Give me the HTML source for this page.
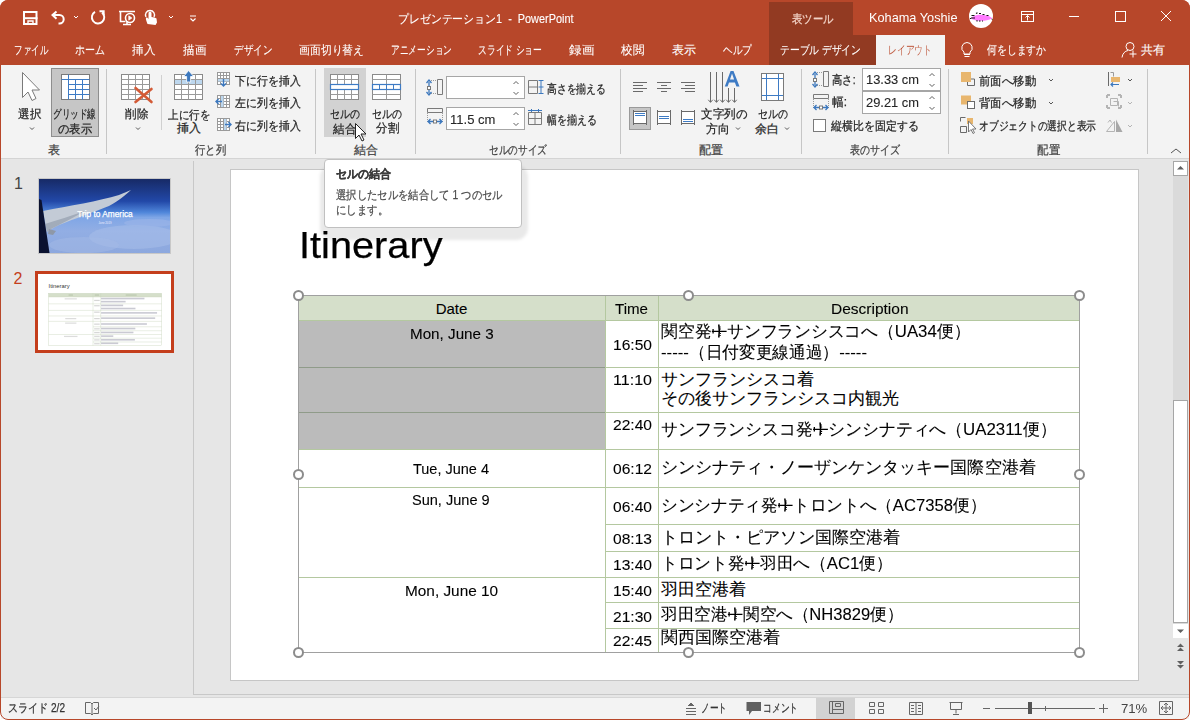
<!DOCTYPE html>
<html><head><meta charset="utf-8">
<style>
*{margin:0;padding:0;box-sizing:border-box}
html,body{width:1190px;height:720px;overflow:hidden;background:#fff}
body{font-family:"Liberation Sans",sans-serif;position:relative;color:#262626}
.a{position:absolute}
.w{color:#fff}
.t{position:absolute;white-space:nowrap;line-height:1;-webkit-text-stroke:0.25px currentColor}
#titlebar{left:0;top:0;width:1190px;height:65px;background:#B7472A;border-radius:8px 8px 0 0}
#ribbon{left:1px;top:65px;width:1188px;height:94px;background:#F3F3F3;border-bottom:1px solid #D4D4D4}
#pane{left:1px;top:159px;width:1188px;height:538px;background:#E6E6E6}
#status{left:1px;top:697px;width:1188px;height:22px;background:#F3F3F3;border-top:1px solid #D6D6D6}
#frame{left:0;top:0;width:1190px;height:720px;border:1px solid #B7472A;border-radius:8px;pointer-events:none}
.tab{font-size:12px;color:#fff;top:44px;-webkit-text-stroke:0.1px #fff}
.sep{position:absolute;width:1px;background:#C6C6C6}
.rb{font-size:11px;color:#262626}
.glab{font-size:11px;color:#444;top:144px}
.inp{position:absolute;background:#fff;border:1px solid #A6A6A6}
</style></head><body>
<div id="titlebar" class="a"></div>
<div id="ribbon" class="a"></div>
<div id="pane" class="a"></div>
<div id="status" class="a"></div>

<!-- contextual tab area -->
<div class="a" style="left:769px;top:2px;width:84px;height:33px;background:#923A22"></div>
<div class="a" style="left:769px;top:35px;width:107px;height:30px;background:#923A22"></div>
<div class="a" style="left:876px;top:35px;width:69px;height:30px;background:#F3F3F3"></div>
<div class="t" style="left:791.5px;top:12.5px;font-size:12px;color:#F2D2C6;--w:41.5px">表ツール</div>
<div class="t" style="left:869px;top:10.5px;font-size:13px;color:#fff;--w:88.5px;-webkit-text-stroke:0">Kohama Yoshie</div>
<div class="t" style="left:398px;top:12.5px;font-size:12px;color:#fff;--w:175.5px;-webkit-text-stroke:0.1px #fff">プレゼンテーション1&nbsp; -&nbsp; PowerPoint</div>

<!-- tabs -->
<div class="t tab" style="left:14px;--w:34px">ファイル</div>
<div class="t tab" style="left:75px;--w:30px">ホーム</div>
<div class="t tab" style="left:132px;--w:23px">挿入</div>
<div class="t tab" style="left:183px;--w:23px">描画</div>
<div class="t tab" style="left:234px;--w:38px">デザイン</div>
<div class="t tab" style="left:299px;--w:65px">画面切り替え</div>
<div class="t tab" style="left:391px;--w:61px">アニメーション</div>
<div class="t tab" style="left:478px;--w:64px">スライド ショー</div>
<div class="t tab" style="left:569px;--w:25px">録画</div>
<div class="t tab" style="left:621px;--w:23px">校閲</div>
<div class="t tab" style="left:672px;--w:24px">表示</div>
<div class="t tab" style="left:723px;--w:29px">ヘルプ</div>
<div class="t tab" style="left:780px;--w:81px">テーブル デザイン</div>
<div class="t tab" style="left:888px;--w:44px;color:#B7472A">レイアウト</div>
<div class="t tab" style="left:987px;--w:59px">何をしますか</div>
<div class="t tab" style="left:1141px;--w:24px">共有</div>

<!-- separators -->
<div class="sep" style="left:106px;top:69px;height:85px"></div>
<div class="sep" style="left:315px;top:69px;height:85px"></div>
<div class="sep" style="left:415px;top:69px;height:85px"></div>
<div class="sep" style="left:620px;top:69px;height:85px"></div>
<div class="sep" style="left:801px;top:69px;height:85px"></div>
<div class="sep" style="left:948px;top:69px;height:85px"></div>
<div class="sep" style="left:1147px;top:69px;height:85px"></div>

<!-- group labels -->


<div class="a" style="left:51px;top:68px;width:48px;height:69px;background:#C6C6C6;border:1px solid #8E8E8E"></div>
<div class="a" style="left:324px;top:68px;width:42px;height:69px;background:#D2D2D2"></div>
<div class="a" style="left:629px;top:107px;width:22px;height:23px;background:#C6C6C6;border:1px solid #9A9A9A"></div>
<div class="inp" style="left:446px;top:76px;width:79px;height:23px"></div>
<div class="inp" style="left:446px;top:107px;width:79px;height:23px"></div>
<div class="inp" style="left:862px;top:68px;width:79px;height:23px"></div>
<div class="inp" style="left:862px;top:91px;width:79px;height:23px"></div>
<div class="a" style="left:813px;top:119px;width:13px;height:13px;background:#fff;border:1px solid #7A7A7A"></div>
<div class="t" style="left:48px;top:143.5px;font-size:12px;--w:12px;color:#444">表</div>
<div class="t" style="left:195px;top:143.5px;font-size:12px;--w:31px;color:#444">行と列</div>
<div class="t" style="left:354px;top:143.5px;font-size:12px;--w:24px;color:#444">結合</div>
<div class="t" style="left:489px;top:143.5px;font-size:12px;--w:58px;color:#444">セルのサイズ</div>
<div class="t" style="left:699px;top:143.5px;font-size:12px;--w:24px;color:#444">配置</div>
<div class="t" style="left:850px;top:143.5px;font-size:12px;--w:50px;color:#444">表のサイズ</div>
<div class="t" style="left:1037px;top:143.5px;font-size:12px;--w:23px;color:#444">配置</div>
<div class="t" style="left:18px;top:107.5px;font-size:12px;--w:23px">選択</div>
<div class="t" style="left:53px;top:107.5px;font-size:12px;--w:43px">グリッド線</div>
<div class="t" style="left:57.6px;top:123.0px;font-size:12px;--w:34px">の表示</div>
<div class="t" style="left:124.6px;top:107.6px;font-size:12px;--w:23px">削除</div>
<div class="t" style="left:168px;top:108.5px;font-size:12px;--w:42px">上に行を</div>
<div class="t" style="left:176.7px;top:122.4px;font-size:12px;--w:24px">挿入</div>
<div class="t" style="left:235px;top:74.7px;font-size:12px;--w:65.5px">下に行を挿入</div>
<div class="t" style="left:235px;top:97.4px;font-size:12px;--w:65.5px">左に列を挿入</div>
<div class="t" style="left:235px;top:119.6px;font-size:12px;--w:65.5px">右に列を挿入</div>
<div class="t" style="left:330px;top:107.5px;font-size:12px;--w:30px">セルの</div>
<div class="t" style="left:333px;top:122.7px;font-size:12px;--w:23px">結合</div>
<div class="t" style="left:372.3px;top:107.5px;font-size:12px;--w:30px">セルの</div>
<div class="t" style="left:375.5px;top:122.4px;font-size:12px;--w:23px">分割</div>
<div class="t" style="left:547.4px;top:83.0px;font-size:12px;--w:58.6px">高さを揃える</div>
<div class="t" style="left:547.4px;top:114.0px;font-size:12px;--w:49.6px">幅を揃える</div>
<div class="t" style="left:449.6px;top:112.5px;font-size:13px;--w:45.4px;color:#262626;-webkit-text-stroke:0.1px #262626">11.5 cm</div>
<div class="t" style="left:700.7px;top:107.8px;font-size:12px;--w:46.3px">文字列の</div>
<div class="t" style="left:705.8px;top:123.0px;font-size:12px;--w:23.5px">方向</div>
<div class="t" style="left:758px;top:107.8px;font-size:12px;--w:30px">セルの</div>
<div class="t" style="left:754.5px;top:123.0px;font-size:12px;--w:24px">余白</div>
<div class="t" style="left:832px;top:73.8px;font-size:12px;--w:23.5px">高さ:</div>
<div class="t" style="left:832px;top:96.0px;font-size:12px;--w:15px">幅:</div>
<div class="t" style="left:865.5px;top:73.3px;font-size:13px;--w:53px;color:#262626;-webkit-text-stroke:0.1px #262626">13.33 cm</div>
<div class="t" style="left:865.5px;top:95.5px;font-size:13px;--w:53px;color:#262626;-webkit-text-stroke:0.1px #262626">29.21 cm</div>
<div class="t" style="left:831px;top:120.0px;font-size:12px;--w:87.5px">縦横比を固定する</div>
<div class="t" style="left:979px;top:74.5px;font-size:12px;--w:57px">前面へ移動</div>
<div class="t" style="left:979px;top:97.0px;font-size:12px;--w:57px">背面へ移動</div>
<div class="t" style="left:979px;top:120.0px;font-size:12px;--w:117px">オブジェクトの選択と表示</div>
<svg class="a" style="left:0;top:0" width="1190" height="160" viewBox="0 0 1190 160">
<g fill="none" stroke-width="1">
<!-- select arrow -->
<path d="M22.5 72.5V97.5L28 92l4 8.5 4-2-4-8.5h7.5z" fill="#fff" stroke="#7A7A7A"/>
<!-- grid icon -->
<rect x="61.5" y="74.5" width="28" height="25" fill="#fff" stroke="#7A7A7A"/>
<path d="M61.5 79.5h28M68.5 74.5v25M68.5 84.5h21M68.5 89.5h21M68.5 94.5h21M75.5 79.5v20M82.5 79.5v20" stroke="#3E7BC4"/>
<!-- delete grid -->
<rect x="121.5" y="74.5" width="28" height="25" fill="#fff" stroke="#8A8A8A"/>
<path d="M128.5 74.5v25M135.5 74.5v25M142.5 74.5v25M121.5 79.5h28M121.5 84.5h28M121.5 89.5h28M121.5 94.5h28" stroke="#9A9A9A"/>
<path d="M135.5 88l16 14M151.5 89l-16 13" stroke="#D35A36" stroke-width="2.6" stroke-linecap="round"/>
<path d="M161.5 75v55" stroke="#D0D0D0"/>
<!-- insert above -->
<rect x="174.5" y="74.5" width="28" height="25" fill="#fff" stroke="#8A8A8A"/>
<rect x="175" y="80" width="27" height="4.5" fill="#BDD7EE"/>
<path d="M181.5 74.5v25M188.5 74.5v25M195.5 74.5v25M174.5 79.5h28M174.5 84.5h28M174.5 89.5h28M174.5 94.5h28" stroke="#9A9A9A"/>
<path d="M188.6 70.5l-5 6h3v5.5h4v-5.5h3z" fill="#3C78BE" stroke="#fff" stroke-width="0.8"/>
<!-- small insert icons -->
<g stroke="#9A9A9A">
<rect x="217.5" y="72.5" width="12" height="12" fill="#fff"/>
<path d="M220.5 72.5v12M223.5 72.5v12M226.5 72.5v12M217.5 75.5h12M217.5 78.5h12M217.5 81.5h12"/>
<rect x="217.5" y="95.5" width="12" height="12" fill="#fff"/>
<path d="M220.5 95.5v12M223.5 95.5v12M226.5 95.5v12M217.5 98.5h12M217.5 101.5h12M217.5 104.5h12"/>
<rect x="217.5" y="118.5" width="12" height="12" fill="#fff"/>
<path d="M220.5 118.5v12M223.5 118.5v12M226.5 118.5v12M217.5 121.5h12M217.5 124.5h12M217.5 127.5h12"/>
</g>
<rect x="218" y="79" width="11" height="2.5" fill="#BDD7EE"/>
<rect x="221" y="96" width="2.5" height="11" fill="#BDD7EE"/>
<rect x="224" y="119" width="2.5" height="11" fill="#BDD7EE"/>
<path d="M223.5 79v7M221 83.5l2.5 2.5 2.5-2.5" stroke="#3C78BE" stroke-width="1.4"/>
<path d="M216 101.5h6M218.5 99l-2.5 2.5 2.5 2.5" stroke="#3C78BE" stroke-width="1.4"/>
<path d="M225 124.5h6M228.5 122l2.5 2.5-2.5 2.5" stroke="#3C78BE" stroke-width="1.4"/>
<!-- merge -->
<rect x="330.5" y="74.5" width="28" height="25" fill="#fff" stroke="#8A8A8A"/>
<path d="M337.5 74.5v10M344.5 74.5v10M351.5 74.5v10M337.5 89.5v10M344.5 89.5v10M351.5 89.5v10M330.5 79.5h28M330.5 94.5h28" stroke="#9A9A9A"/>
<rect x="330.5" y="84.5" width="28" height="5" stroke="#3E7BC4" stroke-width="1.2"/>
<!-- split -->
<rect x="372.5" y="74.5" width="28" height="25" fill="#fff" stroke="#8A8A8A"/>
<path d="M386.5 74.5v10M386.5 89.5v10M372.5 79.5h28M372.5 94.5h28" stroke="#9A9A9A"/>
<rect x="372.5" y="84.5" width="28" height="5" stroke="#3E7BC4" stroke-width="1.2"/>
<path d="M379.5 84.5v5M386.5 84.5v5M393.5 84.5v5" stroke="#3E7BC4"/>
<!-- cell height/width icons -->
<path d="M437.5 79.5h5v15h-5z" stroke="#7A7A7A"/>
<path d="M429 80.5h8M429 93.5h8" stroke="#9A9A9A" stroke-dasharray="1 1"/>
<path d="M429 82v11" stroke="#3C78BE" stroke-width="1.3"/>
<path d="M426.5 83l2.5-3 2.5 3M426.5 92l2.5 3 2.5-3" stroke="#3C78BE" stroke-width="1.3"/>
<rect x="427.5" y="86.5" width="3" height="3" fill="#fff" stroke="#7A7A7A"/>
<path d="M427.5 108.5h15v4h-15z" stroke="#7A7A7A"/>
<path d="M427.5 113v9M442.5 113v9" stroke="#9A9A9A" stroke-dasharray="1 1"/>
<path d="M428 121.5h14M430.5 119l-2.5 2.5 2.5 2.5M439.5 119l2.5 2.5-2.5 2.5" stroke="#3C78BE" stroke-width="1.3"/>
<rect x="433.5" y="120" width="3" height="3" fill="#fff" stroke="#7A7A7A"/>
<!-- distribute -->
<path d="M528.5 80.5h9v13h-9zM528.5 87h9" stroke="#7A7A7A"/>
<path d="M538.5 80.5h5M538.5 87h5M538.5 93.5h5M541 80v14" stroke="#3C78BE"/>
<path d="M528.5 112.5h13v12h-13zM535 112.5v12M528.5 118.5h13" stroke="#7A7A7A"/>
<path d="M528 110.5h14M531.5 109v3M538.5 109v3" stroke="#3C78BE"/>
<!-- spinners -->
<g stroke="#606060">
<path d="M513.5 84l2.5-2.5 2.5 2.5M513.5 92l2.5 2.5 2.5-2.5"/>
<path d="M513.5 115l2.5-2.5 2.5 2.5M513.5 123l2.5 2.5 2.5-2.5"/>
<path d="M929.5 76l2.5-2.5 2.5 2.5M929.5 84l2.5 2.5 2.5-2.5"/>
<path d="M929.5 99l2.5-2.5 2.5 2.5M929.5 107l2.5 2.5 2.5-2.5"/>
</g>
<!-- align -->
<g stroke="#6A6A6A">
<path d="M633 82.5h14M633 85.5h10M633 88.5h14M633 91.5h10"/>
<path d="M657 82.5h14M661 85.5h6M657 88.5h14M661 91.5h6"/>
<path d="M681 82.5h14M685 85.5h10M681 88.5h14M685 91.5h10"/>
<rect x="633.5" y="111.5" width="13" height="12" fill="#fff"/>
<rect x="657.5" y="111.5" width="13" height="12" fill="#fff"/>
<rect x="681.5" y="111.5" width="13" height="12" fill="#fff"/>
<path d="M633.5 110v15M646.5 110v15M657.5 110v15M670.5 110v15M681.5 110v15M694.5 110v15"/>
</g>
<path d="M635 113.5h10M635 115.5h10M659 116.5h10M659 118.5h10M683 119.5h10M683 121.5h10" stroke="#3E7BC4"/>
<!-- text direction -->
<g stroke="#6A6A6A">
<path d="M710.5 72v30M716.5 72v30M722.5 72v30M728.5 88v14M734.5 88v14"/>
<path d="M708.3 99.8l2.2 2.6 2.2-2.6M714.3 99.8l2.2 2.6 2.2-2.6M720.3 99.8l2.2 2.6 2.2-2.6M726.3 99.8l2.2 2.6 2.2-2.6M732.3 99.8l2.2 2.6 2.2-2.6"/>
</g>
<path d="M724.8 86.6L730.6 71h2.9l6 15.6h-3.1l-1.5-4.2h-5.9l-1.4 4.2zM730 79.6h4.1L732 73.6z" fill="#3E7BC4" stroke="none" fill-rule="evenodd"/>
<!-- cell margins -->
<rect x="761.5" y="73.5" width="22" height="27" fill="#fff" stroke="#7A7A7A"/>
<path d="M766.5 74v26M778.5 74v26M762 78.5h21M762 95.5h21" stroke="#3E7BC4"/>
<!-- table size icons -->
<path d="M823.5 71.5h5v15h-5z" stroke="#7A7A7A"/>
<path d="M815 72.5h8M815 85.5h8" stroke="#9A9A9A" stroke-dasharray="1 1"/>
<path d="M815 74v11M812.5 75l2.5-3 2.5 3M812.5 84l2.5 3 2.5-3" stroke="#3C78BE" stroke-width="1.3"/>
<rect x="813.5" y="78.5" width="3" height="3" fill="#fff" stroke="#7A7A7A"/>
<path d="M813.5 94.5h15v4h-15z" stroke="#7A7A7A"/>
<path d="M813.5 99v9M828.5 99v9" stroke="#9A9A9A" stroke-dasharray="1 1"/>
<path d="M814 107.5h14M816.5 105l-2.5 2.5 2.5 2.5M825.5 105l2.5 2.5-2.5 2.5" stroke="#3C78BE" stroke-width="1.3"/>
<rect x="819.5" y="106" width="3" height="3" fill="#fff" stroke="#7A7A7A"/>
<!-- arrange -->
<rect x="961" y="72" width="10" height="10" fill="#E8B66E"/>
<path d="M967.5 82v3.5h7v-6.5h-3.5" stroke="#6A6A6A"/>
<rect x="961" y="95.5" width="10" height="9" fill="#E8B66E"/>
<rect x="967.5" y="101.5" width="7" height="7" fill="#fff" stroke="#6A6A6A"/>
<path d="M960.5 117.5h5M960.5 117.5v4M960.5 126.5h6v6h-6z" stroke="#6A6A6A"/>
<rect x="967" y="118" width="6" height="6" fill="#E8B66E"/>
<path d="M968.5 121v11l2.5-2.5 2 4 1.5-.8-2-3.7h3.5z" fill="#fff" stroke="#6A6A6A" stroke-width="0.9"/>
<path d="M1108.5 72v14" stroke="#6A6A6A"/>
<path d="M1110.5 72.5h3v4" stroke="#9A9A9A"/>
<rect x="1111" y="77" width="9" height="5" fill="#E8B66E"/>
<path d="M1111 84.5h8M1113 82.5l-2 2 2 2" stroke="#3C78BE" stroke-width="1.2"/>
<g stroke="#B4B4B4">
<path d="M1107 95h3M1118 95h3M1107 108h3M1118 108h3M1107 95v3M1107 105v3M1121 95v3M1121 105v3" stroke-width="2"/>
<path d="M1110.5 98.5h7v7h-7zM1113.5 101.5h5v5" />
<path d="M1106.5 131.5h8v-10z" stroke-width="1"/>
<path d="M1108 122.5l2-2.5 1.5 2.5" stroke-width="1"/>
</g>
<path d="M1116 119.5l6.5 12.5h-6.5z" fill="#A8A8A8"/>
<!-- chevrons -->
<g stroke="#555" stroke-width="1">
<path d="M30 127.5l2 2 2-2M136 127.5l2 2 2-2M736 127.5l2 2 2-2M785 127.5l2 2 2-2"/>
<path d="M1049 79l2 2 2-2M1049 102l2 2 2-2M1128 79l2 2 2-2"/>
</g>
<path d="M1128 102l2 2 2-2M1128 125l2 2 2-2" stroke="#B4B4B4"/>
<path d="M1171 153l5-4 5 4" stroke="#555"/>
<!-- mouse cursor -->
<path d="M355.5 123.5v15l3.5-3.5 3 6 2-1-3-6h5z" fill="#fff" stroke="#222" stroke-width="1"/>
</g>
</svg>

<!-- slide canvas -->
<div class="a" style="left:193px;top:161px;width:1px;height:534px;background:#C8C8C8"></div>
<div class="a" style="left:230px;top:169px;width:909px;height:512px;background:#fff;border:1px solid #C6C6C6"></div>


<svg class="a" style="left:0;top:0" width="1190" height="160" viewBox="0 0 1190 160">
<g fill="none" stroke-linecap="butt">
<!-- QAT icons white -->
<g stroke="#fff" stroke-width="1.6">
 <path d="M24 12h12.5v12h-12.5z" stroke-width="2"/>
 <path d="M23 18.2h14.5" stroke-width="2"/>
 <path d="M28 24v-3h5v3" stroke-width="1.4"/>
 <path d="M56.5 11.5L52.5 15l4 3.8M52.5 15H59.5a4.2 4.2 0 0 1 0 8.4H58.5" stroke-width="2"/>
 <path d="M74 16l2 2 2-2" stroke-width="1"/>
 <path d="M95 11.9A6.2 6.2 0 1 0 102 12.5" stroke-width="1.9"/>
 <path d="M99.5 11.2h4.2v4.2" stroke-width="1.9"/>
 <path d="M119 11.5h16M120.5 11.5v10h5M131 24.5h-8M127 21v3.5"/>
 <circle cx="130" cy="18" r="4.5"/>
 <path d="M128.8 15.8l3 2.2-3 2.2z" fill="#fff" stroke-width="0.8"/>
 <path d="M169 16l2 2 2-2" stroke-width="1"/>
 <path d="M190 16h6M190.5 18.5l2.5 2.5 2.5-2.5" stroke-width="1.2"/>
</g>
<path d="M147.5 24c-1-3-2-5-1.5-6s2 0 2.5 1v-6a1.5 1.5 0 0 1 3 0v4c2 .3 4 .8 5 1.5l.5 4-1.5 2.5z" fill="#fff"/>
<path d="M146 17a4.5 4.5 0 1 1 8 0" stroke="#fff" stroke-width="1.4"/>
<!-- window buttons -->
<g stroke="#fff" stroke-width="1">
 <rect x="1021.5" y="11.5" width="12" height="10"/>
 <path d="M1021.5 14.5h12M1027.5 20.5v-5M1025.5 17.5l2-2 2 2"/>
 <path d="M1069 16.5h10"/>
 <rect x="1115.5" y="11.5" width="10" height="10"/>
 <path d="M1161 11l10 10M1171 11l-10 10"/>
 <path d="M964 54.5h6M964.5 56.5h5M967 42.5a5.3 5.3 0 0 0-3 9.6v1.9h6v-1.9a5.3 5.3 0 0 0-3-9.6z"/>
 <circle cx="1130" cy="46.5" r="4"/>
 <path d="M1122 57.5c.5-4 3-6.5 6-7M1133 50.5v7M1129.5 54h7"/>
</g>
</g>
</svg>
<svg class="a" style="left:969px;top:4px" width="24" height="24" viewBox="0 0 24 24"><circle cx="12" cy="12" r="12" fill="#fff"/><path d="M2 14.5C4 11.5 8 10.5 12 10.8C16 11 20 11.5 23.3 14.3C20 16.2 16 16.8 12 16.8C8 16.8 4 16.3 2 14.5z" fill="#FF7BFF"/><path d="M7 9.5l1.5-0.8M10 9.5h2M13.5 10.5h2M17.5 11.5h2M2.5 11.5h3M2 14h4M1.5 15v-1M7.5 16.5l1 .8M10 17h1.5M13 17h1M22.8 15.5l.5-.5" stroke="#111" stroke-width="1.1" fill="none"/></svg>

<div class="a" style="left:194px;top:694px;width:995px;height:1px;background:#C8C8C8"></div>
<div class="t" style="left:14px;top:175.5px;font-size:16px;color:#444;-webkit-text-stroke:0">1</div>
<div class="t" style="left:13.5px;top:270.5px;font-size:16px;color:#C43E1C;-webkit-text-stroke:0">2</div>
<div class="a" style="left:38px;top:178px;width:133px;height:76px;border:1px solid #C8C8C8;overflow:hidden">
<svg width="131" height="74" viewBox="0 0 131 74" style="display:block">
<defs><linearGradient id="sky" x1="0" y1="0" x2="0" y2="1">
<stop offset="0" stop-color="#172A66"/><stop offset="0.3" stop-color="#2248A8"/><stop offset="0.45" stop-color="#4F86DA"/><stop offset="0.52" stop-color="#7FA6E6"/><stop offset="0.7" stop-color="#92AEE4"/><stop offset="1" stop-color="#8DA8DE"/></linearGradient></defs>
<rect width="131" height="74" fill="url(#sky)"/>
<ellipse cx="95" cy="58" rx="45" ry="12" fill="#A9BFEA" opacity="0.5"/>
<ellipse cx="45" cy="66" rx="35" ry="8" fill="#A3B9E6" opacity="0.5"/>
<ellipse cx="110" cy="44" rx="25" ry="4" fill="#9DB6E8" opacity="0.6"/>
<path d="M4 32 C30 27 60 22 80 16 C85 14 89 12 92 11 C86 16 80 22 70 27 C55 33 35 40 20 46 C14 49 10 51 8 53z" fill="#C3CBD6"/>
<path d="M6 45 C18 41 32 37 46 32 C34 39 22 45 12 50 L8 53z" fill="#A2ACBA"/>
<path d="M10 50 L17 52 L14 56 L9 55z" fill="#8E98A8"/>
<path d="M0 20 L2.5 21 L10.5 74 L0 74z" fill="#0B1230"/>
<text x="66" y="37.5" font-size="8.3" fill="#fff" stroke="#fff" stroke-width="0.25" text-anchor="middle" font-family="Liberation Sans">Trip to America</text>
<text x="66" y="45" font-size="2.8" fill="#EEF" text-anchor="middle" font-family="Liberation Sans">June 2019</text>
</svg></div>
<div class="a" style="left:35px;top:271px;width:139px;height:82px;border:3px solid #C43E1C;background:#fff"></div>
<svg class="a" style="left:38px;top:274px" width="133" height="76" viewBox="0 0 133 76"><text x="10.6" y="14.2" font-size="5.8" fill="#333" font-family="Liberation Sans">Itinerary</text><rect x="10.5" y="19.3" width="113.20" height="3.66" fill="#D5DFCA"/><path d="M10.50 22.96H123.7" stroke="#C8D4BC" stroke-width="0.4"/><path d="M10.50 29.83H123.7" stroke="#C8D4BC" stroke-width="0.4"/><path d="M10.50 36.41H123.7" stroke="#C8D4BC" stroke-width="0.4"/><path d="M10.50 41.96H123.7" stroke="#C8D4BC" stroke-width="0.4"/><path d="M10.50 47.37H123.7" stroke="#C8D4BC" stroke-width="0.4"/><path d="M55.00 52.78H123.7" stroke="#C8D4BC" stroke-width="0.4"/><path d="M55.00 56.73H123.7" stroke="#C8D4BC" stroke-width="0.4"/><path d="M10.50 60.53H123.7" stroke="#C8D4BC" stroke-width="0.4"/><path d="M55.00 64.19H123.7" stroke="#C8D4BC" stroke-width="0.4"/><path d="M55.00 67.99H123.7" stroke="#C8D4BC" stroke-width="0.4"/><rect x="10.5" y="19.3" width="113.20" height="52.20" fill="none" stroke="#C8D4BC" stroke-width="0.4"/><path d="M55.00 19.3V71.5M62.68 19.3V71.5" stroke="#C8D4BC" stroke-width="0.4"/><rect x="63.11" y="23.76" width="43.34" height="1.6" fill="#7A7A90" opacity="0.4"/><rect x="63.11" y="26.83" width="24.50" height="1.6" fill="#7A7A90" opacity="0.4"/><rect x="63.11" y="30.64" width="22.03" height="1.6" fill="#7A7A90" opacity="0.4"/><rect x="63.11" y="33.71" width="34.35" height="1.6" fill="#7A7A90" opacity="0.4"/><rect x="63.11" y="38.09" width="55.95" height="1.6" fill="#7A7A90" opacity="0.4"/><rect x="63.11" y="43.36" width="54.06" height="1.6" fill="#7A7A90" opacity="0.4"/><rect x="63.11" y="49.21" width="45.80" height="1.6" fill="#7A7A90" opacity="0.4"/><rect x="63.11" y="53.74" width="34.21" height="1.6" fill="#7A7A90" opacity="0.4"/><rect x="63.11" y="57.69" width="32.32" height="1.6" fill="#7A7A90" opacity="0.4"/><rect x="63.11" y="61.34" width="12.18" height="1.6" fill="#7A7A90" opacity="0.4"/><rect x="63.11" y="65.00" width="33.77" height="1.6" fill="#7A7A90" opacity="0.4"/><rect x="63.11" y="68.51" width="17.10" height="1.6" fill="#7A7A90" opacity="0.4"/><rect x="56.16" y="25.86" width="5.51" height="1.2" fill="#8A8A8A" opacity="0.35"/><rect x="56.16" y="31.13" width="5.51" height="1.2" fill="#8A8A8A" opacity="0.35"/><rect x="56.16" y="37.56" width="5.51" height="1.2" fill="#8A8A8A" opacity="0.35"/><rect x="56.16" y="44.00" width="5.51" height="1.2" fill="#8A8A8A" opacity="0.35"/><rect x="56.16" y="49.55" width="5.51" height="1.2" fill="#8A8A8A" opacity="0.35"/><rect x="56.16" y="54.23" width="5.51" height="1.2" fill="#8A8A8A" opacity="0.35"/><rect x="56.16" y="58.03" width="5.51" height="1.2" fill="#8A8A8A" opacity="0.35"/><rect x="56.16" y="61.69" width="5.51" height="1.2" fill="#8A8A8A" opacity="0.35"/><rect x="56.16" y="65.34" width="5.51" height="1.2" fill="#8A8A8A" opacity="0.35"/><rect x="56.16" y="69.15" width="5.51" height="1.2" fill="#8A8A8A" opacity="0.35"/><rect x="26.66" y="24.26" width="12.18" height="1.2" fill="#9A9A9A" opacity="0.35"/><rect x="27.24" y="44.00" width="11.02" height="1.2" fill="#9A9A9A" opacity="0.35"/><rect x="27.10" y="48.53" width="11.31" height="1.2" fill="#9A9A9A" opacity="0.35"/><rect x="26.01" y="61.83" width="13.48" height="1.2" fill="#9A9A9A" opacity="0.35"/><rect x="30.57" y="20.55" width="4.35" height="1" fill="#8A9A7A" opacity="0.4"/><rect x="56.74" y="20.55" width="4.35" height="1" fill="#8A9A7A" opacity="0.4"/><rect x="87.75" y="20.55" width="10.87" height="1" fill="#8A9A7A" opacity="0.4"/></svg>
<div class="t" style="left:299px;top:228px;font-size:36.5px;color:#000;--w:143.5px">Itinerary</div>
<div class="a" style="left:298px;top:295px;width:781px;height:25px;background:#D5DFCA"></div><div class="a" style="left:298px;top:320px;width:307px;height:130px;background:#BBBBBB"></div><div class="a" style="left:298px;top:320px;width:781px;height:1px;background:#B4C8A0"></div><div class="a" style="left:298px;top:367px;width:781px;height:1px;background:#B4C8A0"></div><div class="a" style="left:298px;top:412px;width:781px;height:1px;background:#B4C8A0"></div><div class="a" style="left:298px;top:449px;width:781px;height:1px;background:#B4C8A0"></div><div class="a" style="left:298px;top:487px;width:781px;height:1px;background:#B4C8A0"></div><div class="a" style="left:605px;top:524px;width:474px;height:1px;background:#B4C8A0"></div><div class="a" style="left:605px;top:551px;width:474px;height:1px;background:#B4C8A0"></div><div class="a" style="left:298px;top:577px;width:781px;height:1px;background:#B4C8A0"></div><div class="a" style="left:605px;top:602px;width:474px;height:1px;background:#B4C8A0"></div><div class="a" style="left:605px;top:628px;width:474px;height:1px;background:#B4C8A0"></div><div class="a" style="left:605px;top:295px;width:1px;height:357px;background:#B4C8A0"></div><div class="a" style="left:658px;top:295px;width:1px;height:357px;background:#B4C8A0"></div><div class="a" style="left:298px;top:367px;width:307px;height:1px;background:#8F9B89"></div><div class="a" style="left:298px;top:412px;width:307px;height:1px;background:#8F9B89"></div><div class="a" style="left:298px;top:295px;width:782px;height:358px;border:1px solid #A0A0A0"></div><div class="a" style="left:293px;top:290px;width:11px;height:11px;border-radius:50%;background:#fff;border:2px solid #8C8C8C"></div><div class="a" style="left:683px;top:290px;width:11px;height:11px;border-radius:50%;background:#fff;border:2px solid #8C8C8C"></div><div class="a" style="left:1074px;top:290px;width:11px;height:11px;border-radius:50%;background:#fff;border:2px solid #8C8C8C"></div><div class="a" style="left:293px;top:469px;width:11px;height:11px;border-radius:50%;background:#fff;border:2px solid #8C8C8C"></div><div class="a" style="left:1074px;top:469px;width:11px;height:11px;border-radius:50%;background:#fff;border:2px solid #8C8C8C"></div><div class="a" style="left:293px;top:647px;width:11px;height:11px;border-radius:50%;background:#fff;border:2px solid #8C8C8C"></div><div class="a" style="left:683px;top:647px;width:11px;height:11px;border-radius:50%;background:#fff;border:2px solid #8C8C8C"></div><div class="a" style="left:1074px;top:647px;width:11px;height:11px;border-radius:50%;background:#fff;border:2px solid #8C8C8C"></div>
<div class="t" style="top:301.2px;font-size:15px;color:#000;-webkit-text-stroke:0.1px #000;left:251.5px;width:400px;text-align:center">Date</div>
<div class="t" style="top:301.2px;font-size:15px;color:#000;-webkit-text-stroke:0.1px #000;left:615.4px;--w:33px">Time</div>
<div class="t" style="top:301.2px;font-size:15px;color:#000;-webkit-text-stroke:0.1px #000;left:830.5px;--w:77.5px">Description</div>
<div class="t" style="top:326.0px;font-size:15px;color:#000;-webkit-text-stroke:0.1px #000;left:409.6px;--w:83.7px">Mon, June 3</div>
<div class="t" style="top:460.5px;font-size:15px;color:#000;-webkit-text-stroke:0.1px #000;left:413px;--w:76px">Tue, June 4</div>
<div class="t" style="top:492.1px;font-size:15px;color:#000;-webkit-text-stroke:0.1px #000;left:412.3px;--w:77.6px">Sun, June 9</div>
<div class="t" style="top:582.7px;font-size:15px;color:#000;-webkit-text-stroke:0.1px #000;left:405.4px;--w:93.1px">Mon, June 10</div>
<div class="t" style="top:337.0px;font-size:15px;color:#000;-webkit-text-stroke:0.1px #000;left:613px;--w:39px">16:50</div>
<div class="t" style="top:372.0px;font-size:15px;color:#000;-webkit-text-stroke:0.1px #000;left:613px;--w:39px">11:10</div>
<div class="t" style="top:417.4px;font-size:15px;color:#000;-webkit-text-stroke:0.1px #000;left:613px;--w:39px">22:40</div>
<div class="t" style="top:461.1px;font-size:15px;color:#000;-webkit-text-stroke:0.1px #000;left:613px;--w:39px">06:12</div>
<div class="t" style="top:498.7px;font-size:15px;color:#000;-webkit-text-stroke:0.1px #000;left:613px;--w:39px">06:40</div>
<div class="t" style="top:531.2px;font-size:15px;color:#000;-webkit-text-stroke:0.1px #000;left:613px;--w:39px">08:13</div>
<div class="t" style="top:556.9px;font-size:15px;color:#000;-webkit-text-stroke:0.1px #000;left:613px;--w:39px">13:40</div>
<div class="t" style="top:583.2px;font-size:15px;color:#000;-webkit-text-stroke:0.1px #000;left:613px;--w:39px">15:40</div>
<div class="t" style="top:608.5px;font-size:15px;color:#000;-webkit-text-stroke:0.1px #000;left:613px;--w:39px">21:30</div>
<div class="t" style="top:633.2px;font-size:15px;color:#000;-webkit-text-stroke:0.1px #000;left:613px;--w:39px">22:45</div>
<div class="t" style="left:661px;top:322.7px;font-size:17px;line-height:17px;color:#000;-webkit-text-stroke:0.1px #000;--w:309.3px">関空発<svg width="16" height="16" viewBox="0 0 16 16" style="display:inline-block;vertical-align:-2px"><path d="M0.5 8.3H15.5M1.8 6v4.6" stroke="#000" stroke-width="1.3" fill="none"/><path d="M7.6 1.5Q8.6 8 7.6 14.5" stroke="#000" stroke-width="1.6" fill="none"/><path d="M8.2 4h1.3M8.5 6h1.2M8.5 10.5h1.2M8.2 12.5h1.3" stroke="#000" stroke-width="1"/></svg>サンフランシスコへ（UA34便）</div>
<div class="t" style="left:661px;top:344.1px;font-size:17px;line-height:17px;color:#000;-webkit-text-stroke:0.1px #000;--w:206.0px">-----（日付変更線通過）-----</div>
<div class="t" style="left:661px;top:370.7px;font-size:17px;line-height:17px;color:#000;-webkit-text-stroke:0.1px #000;--w:153.0px">サンフランシスコ着</div>
<div class="t" style="left:661px;top:390.0px;font-size:17px;line-height:17px;color:#000;-webkit-text-stroke:0.1px #000;--w:238.0px">その後サンフランシスコ内観光</div>
<div class="t" style="left:661px;top:420.7px;font-size:17px;line-height:17px;color:#000;-webkit-text-stroke:0.1px #000;--w:395.4px">サンフランシスコ発<svg width="16" height="16" viewBox="0 0 16 16" style="display:inline-block;vertical-align:-2px"><path d="M0.5 8.3H15.5M1.8 6v4.6" stroke="#000" stroke-width="1.3" fill="none"/><path d="M7.6 1.5Q8.6 8 7.6 14.5" stroke="#000" stroke-width="1.6" fill="none"/><path d="M8.2 4h1.3M8.5 6h1.2M8.5 10.5h1.2M8.2 12.5h1.3" stroke="#000" stroke-width="1"/></svg>シンシナティへ（UA2311便）</div>
<div class="t" style="left:661px;top:459.0px;font-size:17px;line-height:17px;color:#000;-webkit-text-stroke:0.1px #000;--w:374.6px">シンシナティ・ノーザンケンタッキー国際空港着</div>
<div class="t" style="left:661px;top:496.5px;font-size:17px;line-height:17px;color:#000;-webkit-text-stroke:0.1px #000;--w:325.2px">シンシナティ発<svg width="16" height="16" viewBox="0 0 16 16" style="display:inline-block;vertical-align:-2px"><path d="M0.5 8.3H15.5M1.8 6v4.6" stroke="#000" stroke-width="1.3" fill="none"/><path d="M7.6 1.5Q8.6 8 7.6 14.5" stroke="#000" stroke-width="1.6" fill="none"/><path d="M8.2 4h1.3M8.5 6h1.2M8.5 10.5h1.2M8.2 12.5h1.3" stroke="#000" stroke-width="1"/></svg>トロントへ（AC7358便）</div>
<div class="t" style="left:661px;top:529.4px;font-size:17px;line-height:17px;color:#000;-webkit-text-stroke:0.1px #000;--w:238.9px">トロント・ピアソン国際空港着</div>
<div class="t" style="left:661px;top:555.1px;font-size:17px;line-height:17px;color:#000;-webkit-text-stroke:0.1px #000;--w:231.6px">トロント発<svg width="16" height="16" viewBox="0 0 16 16" style="display:inline-block;vertical-align:-2px"><path d="M0.5 8.3H15.5M1.8 6v4.6" stroke="#000" stroke-width="1.3" fill="none"/><path d="M7.6 1.5Q8.6 8 7.6 14.5" stroke="#000" stroke-width="1.6" fill="none"/><path d="M8.2 4h1.3M8.5 6h1.2M8.5 10.5h1.2M8.2 12.5h1.3" stroke="#000" stroke-width="1"/></svg>羽田へ（AC1便）</div>
<div class="t" style="left:661px;top:581.1px;font-size:17px;line-height:17px;color:#000;-webkit-text-stroke:0.1px #000;--w:85.0px">羽田空港着</div>
<div class="t" style="left:661px;top:605.8px;font-size:17px;line-height:17px;color:#000;-webkit-text-stroke:0.1px #000;--w:242.4px">羽田空港<svg width="16" height="16" viewBox="0 0 16 16" style="display:inline-block;vertical-align:-2px"><path d="M0.5 8.3H15.5M1.8 6v4.6" stroke="#000" stroke-width="1.3" fill="none"/><path d="M7.6 1.5Q8.6 8 7.6 14.5" stroke="#000" stroke-width="1.6" fill="none"/><path d="M8.2 4h1.3M8.5 6h1.2M8.5 10.5h1.2M8.2 12.5h1.3" stroke="#000" stroke-width="1"/></svg>関空へ（NH3829便）</div>
<div class="t" style="left:661px;top:629.3px;font-size:17px;line-height:17px;color:#000;-webkit-text-stroke:0.1px #000;--w:119.4px">関西国際空港着</div>
<div class="a" style="left:320px;top:165px;width:208px;height:75px;border-radius:12px;background:rgba(0,0,0,0.085);filter:blur(1.5px)"></div>
<div class="a" style="left:324px;top:159px;width:198px;height:69px;border-radius:4px;background:#fff;border:1px solid #C0C0C0"></div>
<div class="t" style="left:336px;top:167.5px;font-size:12px;font-weight:bold;color:#3C3C3C;--w:55px">セルの結合</div>
<div class="t" style="left:336px;top:188.7px;font-size:12px;color:#4E4E4E;--w:166.6px">選択したセルを結合して 1 つのセル</div>
<div class="t" style="left:336px;top:203.5px;font-size:12px;color:#4E4E4E;--w:52px">にします。</div>
<div class="a" style="left:1173px;top:175px;width:15px;height:449px;background:#DADADA"></div>
<div class="a" style="left:1173px;top:161px;width:15px;height:15px;background:#fff;border:1px solid #A6A6A6"></div>
<div class="a" style="left:1173px;top:400px;width:15px;height:223px;background:#fff;border:1px solid #A6A6A6"></div>
<div class="a" style="left:1173px;top:624px;width:15px;height:14px;background:#fff"></div>
<svg class="a" style="left:1170px;top:160px" width="20" height="520" viewBox="1170 160 20 520">
<path d="M1177 169.5l3.5-3.5 3.5 3.5z" fill="#606060"/>
<path d="M1177 629.5l3.5 3.5 3.5-3.5z" fill="#606060"/>
<path d="M1177 647l3.5-3.5 3.5 3.5zM1177 651l3.5-3.5 3.5 3.5z" fill="#606060"/>
<path d="M1177 661l3.5 3.5 3.5-3.5zM1177 665l3.5 3.5 3.5-3.5z" fill="#606060"/>
</svg>
<div class="t" style="left:8.4px;top:702px;font-size:12px;color:#333;--w:57px">スライド 2/2</div>
<div class="a" style="left:816px;top:698px;width:39px;height:21px;background:#D2D2D2"></div>
<div class="t" style="left:701px;top:702px;font-size:12px;color:#333;--w:26px">ノート</div>
<div class="t" style="left:762.5px;top:702px;font-size:12px;color:#333;--w:35px">コメント</div>
<div class="t" style="left:1120.6px;top:701.5px;font-size:13px;color:#444;--w:26.3px;-webkit-text-stroke:0">71%</div>
<svg class="a" style="left:0;top:690px" width="1190" height="30" viewBox="0 690 1190 30">
<g fill="none" stroke="#666" stroke-width="1">
<path d="M85.5 702.5h5l1.5 1.5 1.5-1.5h5v11h-5l-1.5 1.5-1.5-1.5h-5zM92 704v10"/>
<path d="M94 708l2 2 3-4" stroke-width="1"/>
<path d="M686 708.5h10M686 711.5h10M686 714.5h10"/>
<path d="M688 706l3-3 3 3" fill="#666"/>
<path d="M829.5 701.5h14v12h-14zM832.5 701.5v12M832.5 709.5h11M835.5 703.5h5v3h-5z"/>
<path d="M869.5 702.5h5v4h-5zM878.5 702.5h5v4h-5zM869.5 709.5h5v4h-5zM878.5 709.5h5v4h-5z"/>
<path d="M909.5 702.5h13v12h-13zM916 702.5v12M911 705.5h3M911 708.5h3M911 711.5h3M918 705.5h3M918 708.5h3M918 711.5h3"/>
<path d="M949.5 702.5h13M950.5 702.5v7h11v-7M956 709.5v4M953 714.5h6"/>
<path d="M983 708.5h7M995 708.5h100M1099 708.5h9M1103.5 704v9M1045.5 706v5"/>
<path d="M1159.5 701.5h13v13h-13zM1166 703v10M1161 708h10M1164 705l2-2 2 2M1164 711l2 2 2-2M1163 706l-2 2 2 2M1169 706l2 2-2 2"/>
</g>
<rect x="1028" y="702" width="4" height="12" fill="#555"/>
<path d="M746.5 702h14.5v9h-9l-3 4v-4h-2.5z" fill="#606060"/>
</svg>
<div id="frame" class="a"></div>
<script>
(function(){var els=document.querySelectorAll('.t');for(var i=0;i<els.length;i++){var e=els[i];var w=parseFloat(getComputedStyle(e).getPropertyValue('--w'));if(!w)continue;var r=e.getBoundingClientRect().width;if(r>0){e.style.transformOrigin='0 50%';e.style.transform='scaleX('+(w/r)+')';}}})();
</script>
</body></html>
